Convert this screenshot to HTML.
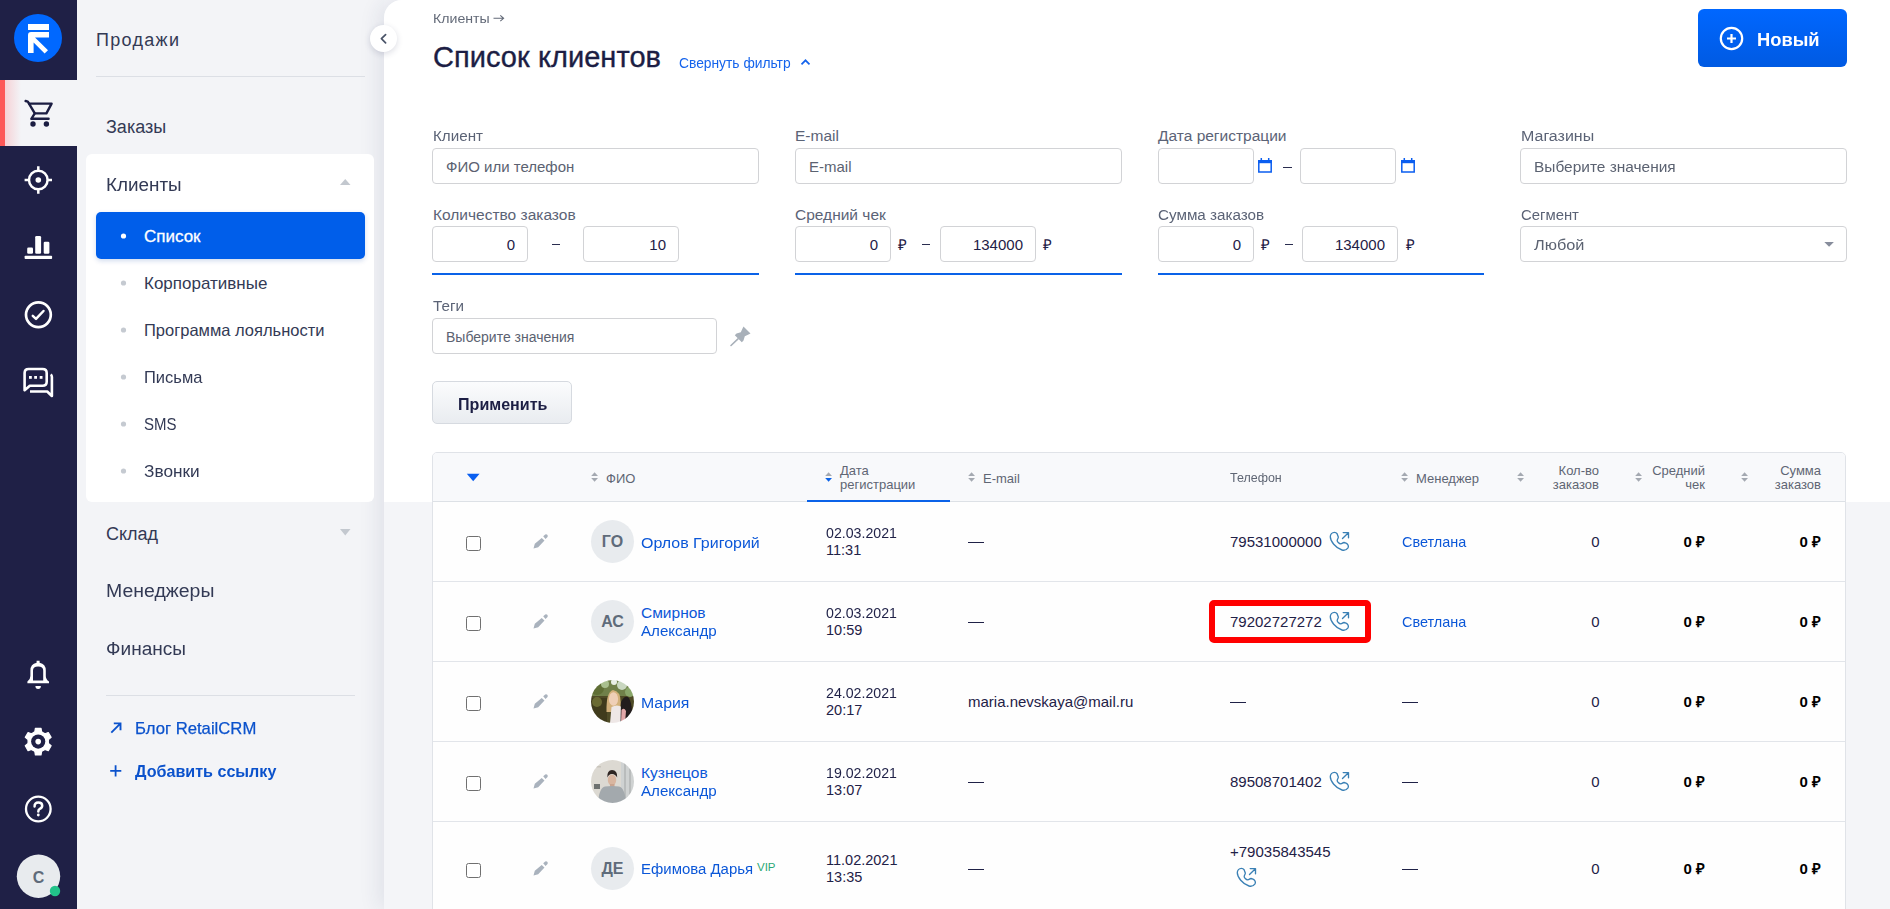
<!DOCTYPE html>
<html><head><meta charset="utf-8">
<style>
*{box-sizing:border-box;margin:0;padding:0}
html,body{width:1890px;height:909px;overflow:hidden;background:#f4f5f8;font-family:"Liberation Sans",sans-serif}
.a{position:absolute}
.t{position:absolute;line-height:1;white-space:nowrap}
#side{left:0;top:0;width:77px;height:909px;background:#1f2046}
#nav{left:77px;top:0;width:307px;height:909px;background:#f3f4f7}
#mainbg{left:384px;top:0;width:1506px;height:909px;background:#f4f5f8;border-top-left-radius:18px;box-shadow:-6px 0 20px rgba(40,45,90,0.085)}
#main{left:384px;top:0;width:1506px;height:502px;background:#fff;border-top-left-radius:18px}
.nt{color:#333a55}
.inp{position:absolute;background:#fff;border:1px solid #d2d3d6;border-radius:4px}
.lbl{color:#5b6376;font-size:15.5px}
.ph{color:#5b6271}
.val{color:#1f2147}
.uline{position:absolute;height:2px;background:#0a62e8}
.th{color:#5f6674;font-size:13px}
.sort{position:absolute;width:8px;height:11px}
.rowline{position:absolute;left:433px;width:1412px;height:1px;background:#e2e5ea}
.cb{position:absolute;width:15px;height:15px;border:1.3px solid #707070;border-radius:2.5px;background:#fff}
.av{position:absolute;width:43px;height:43px;border-radius:50%;background:#e8ebee}
.avt{color:#5f6b7a;font-weight:bold;font-size:16px}
.lnk{color:#0b57d8}
.dk{color:#1f2147}
</style></head><body>
<div class="a" id="side"></div>
<div class="a" id="nav"></div>
<div class="a" id="mainbg"></div>
<div class="a" id="main"></div>

<!-- sidebar icons -->
<svg class="a" style="left:0;top:0" width="77" height="909" viewBox="0 0 77 909">
  <circle cx="38" cy="38" r="24" fill="#0068ff"/>
  <rect x="28" y="24" width="21" height="6" fill="#fff"/>
  <path d="M28 35 Q28 32 31 32 H49 V37.5 H35 L48 50.3 L44.6 53.4 L33.6 42.6 V53 H28 Z" fill="#fff"/>
</svg>
<!-- active cart item -->
<div class="a" style="left:0;top:80px;width:77px;height:66px;background:linear-gradient(to right,#f6d2d6 0,#f6d2d6 5px,#f3f4f7 21px,#f3f4f7 100%)"></div>
<div class="a" style="left:0;top:80px;width:5px;height:66px;background:#fd5858"></div>
<svg class="a" style="left:0;top:0" width="77" height="909" viewBox="0 0 77 909">
  <g fill="none" stroke="#1b1d42" stroke-width="2.4" stroke-linecap="round" stroke-linejoin="round">
    <path d="M25.6 101 L27.8 101.6 L34.8 113.4 L31.3 118.8 H48.6"/>
    <path d="M29.2 103.6 H51.6 L46.4 113.4 H34.8"/>
  </g>
  <circle cx="33" cy="124" r="2.7" fill="#1b1d42"/>
  <circle cx="46.4" cy="124" r="2.7" fill="#1b1d42"/>
  <!-- target -->
  <g fill="none" stroke="#fff" stroke-width="2.5">
    <circle cx="38.3" cy="180" r="9.3"/>
    <path d="M38.3 166.3 V170.5 M38.3 189.5 V193.7 M24.6 180 H28.8 M47.8 180 H52"/>
  </g>
  <circle cx="38.3" cy="180" r="2.8" fill="#fff"/>
  <!-- chart -->
  <g fill="#fff">
    <rect x="27.2" y="247.5" width="5.8" height="6.2" rx="1.3"/>
    <rect x="35.2" y="236" width="5.9" height="17.7" rx="1.3"/>
    <rect x="43.7" y="241.7" width="5.7" height="12" rx="1.3"/>
    <rect x="24.6" y="255.8" width="27.5" height="3.3" rx="0.8"/>
  </g>
  <!-- check -->
  <g fill="none" stroke="#fff" stroke-linecap="round" stroke-linejoin="round">
    <circle cx="38.4" cy="314.8" r="12.4" stroke-width="2.7"/>
    <path d="M32.8 315.9 L36 318.9 L43.5 311" stroke-width="2.5"/>
  </g>
  <!-- chat -->
  <g fill="none" stroke="#fff" stroke-width="2.6" stroke-linejoin="round">
    <path d="M24.6 390.2 V373 Q24.6 369 28.6 369 H42.6 Q46.7 369 46.7 373 V381.8 Q46.7 385.8 42.6 385.8 H29.8 Z"/>
    <path d="M50.6 374.6 Q51.9 375.2 51.9 377 V396 L47.2 391.5 H30"/>
  </g>
  <g fill="#fff">
    <rect x="29" y="376" width="2.8" height="2.8"/>
    <rect x="34.2" y="376" width="2.8" height="2.8"/>
    <rect x="39.7" y="376" width="2.8" height="2.8"/>
  </g>
  <!-- bell -->
  <path fill="#fff" fill-rule="evenodd" d="M27.4 683.3 V681.6 Q30.4 679.4 30.4 676 V670.5 Q30.4 664 36.6 662.8 V660.8 H39.6 V662.8 Q45.8 664 45.8 670.5 V676 Q45.8 679.4 49 681.6 V683.3 Z M33 680.4 H43.2 V670.5 Q43.2 666.6 38.1 666.6 Q33 666.6 33 670.5 Z"/>
  <path fill="#fff" d="M35.4 686 H40.9 Q40.9 689 38.15 689 Q35.4 689 35.4 686 Z"/>
  <!-- gear -->
  <path id="gear" fill="#fff" stroke="#fff" stroke-width="1.2" stroke-linejoin="round" d="M34.81 731.77 L35.37 728.30 L41.03 728.30 L41.59 731.77 L43.25 732.85 L45.02 733.75 L48.31 732.50 L51.13 737.40 L48.41 739.62 L48.30 741.60 L48.41 743.58 L51.13 745.80 L48.31 750.70 L45.02 749.45 L43.25 750.35 L41.59 751.43 L41.03 754.90 L35.37 754.90 L34.81 751.43 L33.15 750.35 L31.38 749.45 L28.09 750.70 L25.27 745.80 L27.99 743.58 L28.10 741.60 L27.99 739.62 L25.27 737.40 L28.09 732.50 L31.38 733.75 L33.15 732.85 Z"/><circle cx="38.2" cy="741.6" r="7.1" fill="#1f2046"/><circle cx="38.2" cy="741.6" r="2.8" fill="#fff"/>
  <!-- help -->
  <circle cx="38.3" cy="809" r="12.3" fill="none" stroke="#fff" stroke-width="2.3"/>
  <path d="M34.6 806.4 Q34.4 802.6 38.3 802.6 Q42.2 802.6 42.2 805.8 Q42.2 807.8 39.8 808.9 Q38.3 809.6 38.3 811.6" fill="none" stroke="#fff" stroke-width="2.5" stroke-linecap="round"/>
  <circle cx="38.3" cy="815" r="1.4" fill="#fff"/>
  <!-- avatar -->
  <circle cx="38.5" cy="876.2" r="21.7" fill="#e8ebee"/>
  <circle cx="55" cy="891" r="5.2" fill="#22c38a"/>
</svg>
<div class="t" style="left:32px;top:870px;font-size:16px;font-weight:bold;color:#5f6b7a;width:13px;text-align:center">С</div>

<!-- NAV PANEL -->
<div class="t nt" style="left:96px;top:30.5px;font-size:18px;letter-spacing:1.3px">Продажи</div>
<div class="a" style="left:96px;top:76px;width:269px;height:1px;background:#dcdfe5"></div>
<div class="t nt" style="left:106px;top:118px;font-size:18px;transform:scaleX(1.000);transform-origin:left">Заказы</div>
<div class="a" style="left:86px;top:154px;width:288px;height:348px;background:#fff;border-radius:6px"></div>
<div class="t nt" style="left:106px;top:176px;font-size:18px;transform:scaleX(1.048);transform-origin:left">Клиенты</div>
<svg class="a" style="left:340px;top:179px" width="11" height="6"><path d="M0 6 L5.25 0 L10.5 6 Z" fill="#c3c8cf"/></svg>
<div class="a" style="left:96px;top:212px;width:269px;height:47px;background:#005eea;border-radius:5px;box-shadow:0 2px 5px rgba(0,60,160,0.18)"></div>
<svg class="a" style="left:119px;top:231.7px" width="9" height="8"><circle cx="4.5" cy="4" r="2.6" fill="#fff"/></svg>
<div class="t" style="left:144px;top:228px;font-size:17px;color:#fff;-webkit-text-stroke:0.3px #fff;transform:scaleX(1.000);transform-origin:left">Список</div>
<svg class="a" style="left:119px;top:278.7px" width="9" height="8"><circle cx="4.5" cy="4" r="2.6" fill="#c5cad1"/></svg>
<div class="t nt" style="left:144px;top:275px;font-size:17px;transform:scaleX(1.000);transform-origin:left">Корпоративные</div>
<svg class="a" style="left:119px;top:325.7px" width="9" height="8"><circle cx="4.5" cy="4" r="2.6" fill="#c5cad1"/></svg>
<div class="t nt" style="left:144px;top:322px;font-size:16.5px;transform:scaleX(1.000);transform-origin:left">Программа лояльности</div>
<svg class="a" style="left:119px;top:372.7px" width="9" height="8"><circle cx="4.5" cy="4" r="2.6" fill="#c5cad1"/></svg>
<div class="t nt" style="left:144px;top:369px;font-size:17px;transform:scaleX(0.970);transform-origin:left">Письма</div>
<svg class="a" style="left:119px;top:419.7px" width="9" height="8"><circle cx="4.5" cy="4" r="2.6" fill="#c5cad1"/></svg>
<div class="t nt" style="left:144px;top:416px;font-size:17px;transform:scaleX(0.882);transform-origin:left">SMS</div>
<svg class="a" style="left:119px;top:466.7px" width="9" height="8"><circle cx="4.5" cy="4" r="2.6" fill="#c5cad1"/></svg>
<div class="t nt" style="left:144px;top:463px;font-size:17px;transform:scaleX(1.015);transform-origin:left">Звонки</div>

<div class="t nt" style="left:106px;top:525.2px;font-size:18px;transform:scaleX(1.000);transform-origin:left">Склад</div>
<svg class="a" style="left:340px;top:529px" width="11" height="7"><path d="M0 0 L10.5 0 L5.25 6.5 Z" fill="#c3c8cf"/></svg>
<div class="t nt" style="left:106px;top:582.4px;font-size:18px;transform:scaleX(1.081);transform-origin:left">Менеджеры</div>
<div class="t nt" style="left:106px;top:639.5px;font-size:18px;transform:scaleX(1.059);transform-origin:left">Финансы</div>
<div class="a" style="left:106px;top:695px;width:249px;height:1px;background:#dcdfe5"></div>
<svg class="a" style="left:108px;top:720px" width="16" height="16"><path d="M3.3 12.6 L12.5 3.4 M5.8 3.4 H12.5 V10.2" fill="none" stroke="#0b52cc" stroke-width="1.9"/></svg>
<div class="t lnk" style="left:135px;top:720px;font-size:17px;color:#0b52cc;-webkit-text-stroke:0.25px #0b52cc;transform:scaleX(0.981);transform-origin:left">Блог RetailCRM</div>
<svg class="a" style="left:108px;top:763px" width="16" height="16"><path d="M7.6 2.3 V13.6 M2.2 7.9 H13.3" fill="none" stroke="#0b52cc" stroke-width="1.8"/></svg>
<div class="t lnk" style="left:135px;top:763px;font-size:17px;font-weight:bold;color:#0b52cc;transform:scaleX(0.947);transform-origin:left">Добавить ссылку</div>

<!-- collapse btn -->
<div class="a" style="left:370px;top:25px;width:27.4px;height:27.4px;border-radius:50%;background:#fff;box-shadow:0 2px 6px rgba(30,40,80,0.16)"></div>
<svg class="a" style="left:370px;top:25px" width="28" height="28"><path d="M15.6 9.6 L11.4 13.7 L15.6 17.8" fill="none" stroke="#4a5468" stroke-width="1.7" stroke-linecap="round" stroke-linejoin="round"/></svg>

<!-- MAIN HEADER -->
<div class="t" style="left:433px;top:12px;font-size:13.5px;color:#636a78;transform:scaleX(1.048);transform-origin:left">Клиенты</div><svg class="a" style="left:492px;top:13px" width="14" height="11"><path d="M1.5 5.3 H11.5 M8.3 2.4 L11.6 5.3 L8.3 8.2" fill="none" stroke="#636a78" stroke-width="1.1"/></svg>
<div class="t" style="left:433px;top:43.2px;font-size:29px;color:#1c1e44;letter-spacing:0.05px;-webkit-text-stroke:0.35px #1c1e44">Список клиентов</div>
<div class="t" style="left:679px;top:56px;font-size:14px;color:#1463ec;transform:scaleX(0.986);transform-origin:left">Свернуть фильтр</div>
<svg class="a" style="left:798px;top:56px" width="14" height="12"><path d="M3.5 8.3 L7.5 4.3 L11.5 8.3" fill="none" stroke="#1463ec" stroke-width="1.7"/></svg>

<div class="a" style="left:1698px;top:9px;width:149px;height:58px;border-radius:6px;background:linear-gradient(#0067ff,#005ae2)"></div>
<svg class="a" style="left:1715px;top:22px" width="34" height="34"><circle cx="16.5" cy="16.5" r="10.7" fill="none" stroke="#fff" stroke-width="2.2"/><path d="M16.5 12 V21 M12 16.5 H21" stroke="#fff" stroke-width="2.2"/></svg>
<div class="t" style="left:1757px;top:30px;font-size:19px;font-weight:bold;color:#fff;transform:scaleX(0.965);transform-origin:left">Новый</div>

<!-- FILTERS -->
<!-- FILTERS -->
<div class="t lbl" style="left:433px;top:127.6px;transform:scaleX(0.980);transform-origin:left">Клиент</div>
<div class="inp" style="left:432px;top:148px;width:327px;height:36px"></div>
<div class="t ph" style="left:446px;top:159px;font-size:15px">ФИО или телефон</div>
<div class="t lbl" style="left:795px;top:127.6px">E-mail</div>
<div class="inp" style="left:795px;top:148px;width:327px;height:36px"></div>
<div class="t ph" style="left:809px;top:159px;font-size:15px">E-mail</div>
<div class="t lbl" style="left:1158px;top:127.6px;transform:scaleX(1.000);transform-origin:left">Дата регистрации</div>
<div class="inp" style="left:1158px;top:148px;width:96px;height:36px"></div>
<div class="inp" style="left:1300px;top:148px;width:96px;height:36px"></div>
<svg class="a" style="left:1257px;top:157px" width="16" height="17"><path d="M1.8 3.8 H14.2 V15 H1.8 Z" fill="none" stroke="#0b5ef0" stroke-width="1.5"/><rect x="1" y="3" width="14" height="3.2" fill="#0b5ef0"/><path d="M4.3 1 V3.5 M11.7 1 V3.5" stroke="#0b5ef0" stroke-width="1.5"/></svg>
<svg class="a" style="left:1400px;top:157px" width="16" height="17"><path d="M1.8 3.8 H14.2 V15 H1.8 Z" fill="none" stroke="#0b5ef0" stroke-width="1.5"/><rect x="1" y="3" width="14" height="3.2" fill="#0b5ef0"/><path d="M4.3 1 V3.5 M11.7 1 V3.5" stroke="#0b5ef0" stroke-width="1.5"/></svg>
<div class="a" style="left:1283px;top:167px;width:8.5px;height:1.3px;background:#2a2d4f"></div>
<div class="t lbl" style="left:1521px;top:127.6px;transform:scaleX(1.031);transform-origin:left">Магазины</div>
<div class="inp" style="left:1520px;top:148px;width:327px;height:36px"></div>
<div class="t ph" style="left:1534px;top:159px;font-size:15px;transform:scaleX(1.03);transform-origin:left">Выберите значения</div>

<div class="t lbl" style="left:433px;top:206.6px;transform:scaleX(1.000);transform-origin:left">Количество заказов</div>
<div class="inp" style="left:432px;top:226px;width:96px;height:36px"></div>
<div class="t val" style="left:432px;top:237px;width:83px;text-align:right;font-size:15px">0</div>
<div class="a" style="left:552px;top:244px;width:8px;height:1.3px;background:#2a2d4f"></div>
<div class="inp" style="left:583px;top:226px;width:96px;height:36px"></div>
<div class="t val" style="left:583px;top:237px;width:83px;text-align:right;font-size:15px">10</div>
<div class="uline" style="left:432px;top:273px;width:327px"></div>

<div class="t lbl" style="left:795px;top:206.6px;transform:scaleX(1.000);transform-origin:left">Средний чек</div>
<div class="inp" style="left:795px;top:226px;width:96px;height:36px"></div>
<div class="t val" style="left:795px;top:237px;width:83px;text-align:right;font-size:15px">0</div>
<div class="t val" style="left:898px;top:237px;font-size:15px">₽</div>
<div class="a" style="left:922px;top:244px;width:8px;height:1.3px;background:#2a2d4f"></div>
<div class="inp" style="left:940px;top:226px;width:96px;height:36px"></div>
<div class="t val" style="left:940px;top:237px;width:83px;text-align:right;font-size:15px">134000</div>
<div class="t val" style="left:1043px;top:237px;font-size:15px">₽</div>
<div class="uline" style="left:795px;top:273px;width:327px"></div>

<div class="t lbl" style="left:1158px;top:206.6px;transform:scaleX(0.982);transform-origin:left">Сумма заказов</div>
<div class="inp" style="left:1158px;top:226px;width:96px;height:36px"></div>
<div class="t val" style="left:1158px;top:237px;width:83px;text-align:right;font-size:15px">0</div>
<div class="t val" style="left:1261px;top:237px;font-size:15px">₽</div>
<div class="a" style="left:1285px;top:244px;width:8px;height:1.3px;background:#2a2d4f"></div>
<div class="inp" style="left:1302px;top:226px;width:96px;height:36px"></div>
<div class="t val" style="left:1302px;top:237px;width:83px;text-align:right;font-size:15px">134000</div>
<div class="t val" style="left:1406px;top:237px;font-size:15px">₽</div>
<div class="uline" style="left:1158px;top:273px;width:326px"></div>

<div class="t lbl" style="left:1521px;top:206.6px;transform:scaleX(0.959);transform-origin:left">Сегмент</div>
<div class="inp" style="left:1520px;top:226px;width:327px;height:36px"></div>
<div class="t ph" style="left:1534px;top:237px;font-size:15px;transform:scaleX(1.087);transform-origin:left">Любой</div>
<svg class="a" style="left:1824px;top:241.5px" width="11" height="6"><path d="M0.3 0 H9.9 L5.1 4.8 Z" fill="#878d9c"/></svg>

<div class="t lbl" style="left:433px;top:297.6px;transform:scaleX(0.981);transform-origin:left">Теги</div>
<div class="inp" style="left:432px;top:318px;width:285px;height:36px"></div>
<div class="t ph" style="left:446px;top:330px;font-size:14px">Выберите значения</div>
<svg class="a" style="left:729px;top:325px" width="24" height="22"><path d="M14.5 1.5 L21.5 8.5 L19.5 9.5 L15.8 11.2 L14.5 15.5 L12.8 17.2 L5.8 10.2 L7.5 8.5 L11.8 7.2 L13.5 3.5 Z" fill="#a8b0b9"/><path d="M9 13.8 L2 20.5" stroke="#a8b0b9" stroke-width="1.6" stroke-linecap="round"/></svg>

<div class="a" style="left:432px;top:381px;width:140px;height:43px;border-radius:5px;border:1px solid #d6dae0;background:linear-gradient(#fbfcfd,#e9ecf0)"></div>
<div class="t" style="left:458px;top:396px;font-size:17px;font-weight:bold;color:#1c1e44;transform:scaleX(0.946);transform-origin:left">Применить</div>

<!--TABLE_START-->
<!-- TABLE -->
<div class="a" style="left:432px;top:452px;width:1414px;height:470px;border:1px solid #e0e3e8;border-radius:5px;background:#fefefe"></div>
<div class="a" style="left:433px;top:453px;width:1412px;height:48px;background:#f8f9fb;border-top-left-radius:4px;border-top-right-radius:4px"></div>
<div class="a" style="left:433px;top:501px;width:1412px;height:1px;background:#dde1e6"></div>
<div class="a" style="left:807px;top:500px;width:143px;height:2px;background:#0a62e8"></div>
<svg class="a" style="left:466px;top:473px" width="15" height="9"><path d="M0.8 0.8 H13.6 L7.2 8.3 Z" fill="#0a5ff0"/></svg>
<svg class="a" style="left:591px;top:471.5px" width="8" height="11"><path d="M0.2 4 L3.6 0.2 L7 4 Z" fill="#a4a9b1"/><path d="M0.2 6 L3.6 9.8 L7 6 Z" fill="#a4a9b1"/></svg>
<svg class="a" style="left:824.5px;top:471.5px" width="8" height="11"><path d="M0.2 4 L3.6 0.2 L7 4 Z" fill="#a4a9b1"/><path d="M0.2 6 L3.6 9.8 L7 6 Z" fill="#0a62e8"/></svg>
<svg class="a" style="left:968px;top:471.5px" width="8" height="11"><path d="M0.2 4 L3.6 0.2 L7 4 Z" fill="#a4a9b1"/><path d="M0.2 6 L3.6 9.8 L7 6 Z" fill="#a4a9b1"/></svg>
<svg class="a" style="left:1401px;top:471.5px" width="8" height="11"><path d="M0.2 4 L3.6 0.2 L7 4 Z" fill="#a4a9b1"/><path d="M0.2 6 L3.6 9.8 L7 6 Z" fill="#a4a9b1"/></svg>
<svg class="a" style="left:1517px;top:471.5px" width="8" height="11"><path d="M0.2 4 L3.6 0.2 L7 4 Z" fill="#a4a9b1"/><path d="M0.2 6 L3.6 9.8 L7 6 Z" fill="#a4a9b1"/></svg>
<svg class="a" style="left:1635px;top:471.5px" width="8" height="11"><path d="M0.2 4 L3.6 0.2 L7 4 Z" fill="#a4a9b1"/><path d="M0.2 6 L3.6 9.8 L7 6 Z" fill="#a4a9b1"/></svg>
<svg class="a" style="left:1741px;top:471.5px" width="8" height="11"><path d="M0.2 4 L3.6 0.2 L7 4 Z" fill="#a4a9b1"/><path d="M0.2 6 L3.6 9.8 L7 6 Z" fill="#a4a9b1"/></svg>
<div class="t th" style="left:606px;top:471.6px">ФИО</div>
<div class="t th" style="left:840px;top:463.8px">Дата</div>
<div class="t th" style="left:840px;top:477.5px">регистрации</div>
<div class="t th" style="left:983px;top:471.8px">E-mail</div>
<div class="t th" style="left:1230px;top:471.3px;transform:scaleX(0.959);transform-origin:left">Телефон</div>
<div class="t th" style="left:1416px;top:471.6px">Менеджер</div>
<div class="t th" style="left:1399px;top:464.0px;width:200px;text-align:right">Кол-во</div>
<div class="t th" style="left:1399px;top:477.8px;width:200px;text-align:right">заказов</div>
<div class="t th" style="left:1505px;top:464.0px;width:200px;text-align:right">Средний</div>
<div class="t th" style="left:1505px;top:477.8px;width:200px;text-align:right">чек</div>
<div class="t th" style="left:1621px;top:464.0px;width:200px;text-align:right">Сумма</div>
<div class="t th" style="left:1621px;top:477.8px;width:200px;text-align:right">заказов</div>
<div class="cb" style="left:466px;top:536px"></div>
<svg class="a" style="left:528px;top:528px" width="26" height="26"><path d="M5.5 20.5 L6.8 15.8 L13.7 9.9 L16.5 12.6 L10.2 19.2 Z M15.2 8.3 L17.2 6.4 Q18.5 5.8 19.5 7 Q20.2 8.2 19.3 9.3 L17.5 11.1 Z" fill="#a9b2bd"/></svg>
<div class="av" style="left:591px;top:519.5px"></div>
<div class="t avt" style="left:591px;top:534.0px;width:43px;text-align:center">ГО</div>
<div class="t lnk" style="left:641px;top:535.1px;font-size:15.5px;;transform:scaleX(1.031);transform-origin:left">Орлов Григорий</div>
<div class="t dk" style="left:826px;top:525.5px;font-size:14.5px;;transform:scaleX(0.978);transform-origin:left">02.03.2021</div>
<div class="t dk" style="left:826px;top:543.4px;font-size:14.5px;">11:31</div>
<div class="a" style="left:968px;top:541.6px;width:16px;height:1.4px;background:#1f2147"></div>
<div class="t dk" style="left:1230px;top:534.0px;font-size:15px;;transform:scaleX(1.000);transform-origin:left">79531000000</div>
<svg class="a" style="left:1326px;top:528px" width="26" height="26"><path d="M8.5 4.3 C6 4.3 4.3 6.3 4.3 8.8 C4.3 13 9.5 20 16 22 C18.5 22.8 20.5 21.8 22 19.8 C23 18 22 16.2 20 15.2 L18 14.5 C17 14.3 16 15.8 14.8 15.8 C13 15.8 11 13.5 11.2 12.3 C11.5 11 12.5 10 12.3 9 L11 5.6 C10.5 4.8 9.6 4.3 8.5 4.3 Z M16.5 10.5 L22.4 4.8 M17.2 4.6 H22.5 V9.8" fill="none" stroke="#3a80b5" stroke-width="1.35" stroke-linecap="round" stroke-linejoin="round"/></svg>
<div class="t lnk" style="left:1402px;top:534.2px;font-size:15px;;transform:scaleX(0.963);transform-origin:left">Светлана</div>
<div class="t dk" style="left:1299.5px;top:534.2px;width:300px;text-align:right;font-size:15px;">0</div>
<div class="t " style="left:1405px;top:534.2px;width:300px;text-align:right;font-size:15px;font-weight:bold;color:#000">0 ₽</div>
<div class="t " style="left:1521px;top:534.2px;width:300px;text-align:right;font-size:15px;font-weight:bold;color:#000">0 ₽</div>
<div class="rowline" style="top:581px"></div>
<div class="cb" style="left:466px;top:616px"></div>
<svg class="a" style="left:528px;top:608px" width="26" height="26"><path d="M5.5 20.5 L6.8 15.8 L13.7 9.9 L16.5 12.6 L10.2 19.2 Z M15.2 8.3 L17.2 6.4 Q18.5 5.8 19.5 7 Q20.2 8.2 19.3 9.3 L17.5 11.1 Z" fill="#a9b2bd"/></svg>
<div class="av" style="left:591px;top:599.5px"></div>
<div class="t avt" style="left:591px;top:614.0px;width:43px;text-align:center">АС</div>
<div class="t lnk" style="left:641px;top:605.1px;font-size:15.5px;;transform:scaleX(1.000);transform-origin:left">Смирнов</div>
<div class="t lnk" style="left:641px;top:623.1px;font-size:15.5px;;transform:scaleX(0.976);transform-origin:left">Александр</div>
<div class="t dk" style="left:826px;top:605.5px;font-size:14.5px;;transform:scaleX(0.978);transform-origin:left">02.03.2021</div>
<div class="t dk" style="left:826px;top:623.4px;font-size:14.5px;">10:59</div>
<div class="a" style="left:968px;top:621.6px;width:16px;height:1.4px;background:#1f2147"></div>
<div class="t dk" style="left:1230px;top:614.0px;font-size:15px;;transform:scaleX(1.000);transform-origin:left">79202727272</div>
<svg class="a" style="left:1326px;top:608px" width="26" height="26"><path d="M8.5 4.3 C6 4.3 4.3 6.3 4.3 8.8 C4.3 13 9.5 20 16 22 C18.5 22.8 20.5 21.8 22 19.8 C23 18 22 16.2 20 15.2 L18 14.5 C17 14.3 16 15.8 14.8 15.8 C13 15.8 11 13.5 11.2 12.3 C11.5 11 12.5 10 12.3 9 L11 5.6 C10.5 4.8 9.6 4.3 8.5 4.3 Z M16.5 10.5 L22.4 4.8 M17.2 4.6 H22.5 V9.8" fill="none" stroke="#3a80b5" stroke-width="1.35" stroke-linecap="round" stroke-linejoin="round"/></svg>
<div class="t lnk" style="left:1402px;top:614.2px;font-size:15px;;transform:scaleX(0.963);transform-origin:left">Светлана</div>
<div class="t dk" style="left:1299.5px;top:614.2px;width:300px;text-align:right;font-size:15px;">0</div>
<div class="t " style="left:1405px;top:614.2px;width:300px;text-align:right;font-size:15px;font-weight:bold;color:#000">0 ₽</div>
<div class="t " style="left:1521px;top:614.2px;width:300px;text-align:right;font-size:15px;font-weight:bold;color:#000">0 ₽</div>
<div class="rowline" style="top:661px"></div>
<div class="cb" style="left:466px;top:696px"></div>
<svg class="a" style="left:528px;top:688px" width="26" height="26"><path d="M5.5 20.5 L6.8 15.8 L13.7 9.9 L16.5 12.6 L10.2 19.2 Z M15.2 8.3 L17.2 6.4 Q18.5 5.8 19.5 7 Q20.2 8.2 19.3 9.3 L17.5 11.1 Z" fill="#a9b2bd"/></svg>
<svg class="a" style="left:591px;top:679.5px" width="43" height="43"><use href="#ph_maria"/></svg>
<div class="t lnk" style="left:641px;top:695.1px;font-size:15.5px;;transform:scaleX(1.022);transform-origin:left">Мария</div>
<div class="t dk" style="left:826px;top:685.5px;font-size:14.5px;;transform:scaleX(0.978);transform-origin:left">24.02.2021</div>
<div class="t dk" style="left:826px;top:703.4px;font-size:14.5px;">20:17</div>
<div class="t dk" style="left:968px;top:694.0px;font-size:15px;">maria.nevskaya@mail.ru</div>
<div class="a" style="left:1230px;top:701.6px;width:16px;height:1.4px;background:#1f2147"></div>
<div class="a" style="left:1402px;top:701.6px;width:16px;height:1.4px;background:#1f2147"></div>
<div class="t dk" style="left:1299.5px;top:694.2px;width:300px;text-align:right;font-size:15px;">0</div>
<div class="t " style="left:1405px;top:694.2px;width:300px;text-align:right;font-size:15px;font-weight:bold;color:#000">0 ₽</div>
<div class="t " style="left:1521px;top:694.2px;width:300px;text-align:right;font-size:15px;font-weight:bold;color:#000">0 ₽</div>
<div class="rowline" style="top:741px"></div>
<div class="cb" style="left:466px;top:776px"></div>
<svg class="a" style="left:528px;top:768px" width="26" height="26"><path d="M5.5 20.5 L6.8 15.8 L13.7 9.9 L16.5 12.6 L10.2 19.2 Z M15.2 8.3 L17.2 6.4 Q18.5 5.8 19.5 7 Q20.2 8.2 19.3 9.3 L17.5 11.1 Z" fill="#a9b2bd"/></svg>
<svg class="a" style="left:591px;top:759.5px" width="43" height="43"><use href="#ph_kuz"/></svg>
<div class="t lnk" style="left:641px;top:765.1px;font-size:15.5px;;transform:scaleX(1.000);transform-origin:left">Кузнецов</div>
<div class="t lnk" style="left:641px;top:783.1px;font-size:15.5px;;transform:scaleX(0.976);transform-origin:left">Александр</div>
<div class="t dk" style="left:826px;top:765.5px;font-size:14.5px;;transform:scaleX(0.978);transform-origin:left">19.02.2021</div>
<div class="t dk" style="left:826px;top:783.4px;font-size:14.5px;">13:07</div>
<div class="a" style="left:968px;top:781.6px;width:16px;height:1.4px;background:#1f2147"></div>
<div class="t dk" style="left:1230px;top:774.0px;font-size:15px;;transform:scaleX(1.000);transform-origin:left">89508701402</div>
<svg class="a" style="left:1326px;top:768px" width="26" height="26"><path d="M8.5 4.3 C6 4.3 4.3 6.3 4.3 8.8 C4.3 13 9.5 20 16 22 C18.5 22.8 20.5 21.8 22 19.8 C23 18 22 16.2 20 15.2 L18 14.5 C17 14.3 16 15.8 14.8 15.8 C13 15.8 11 13.5 11.2 12.3 C11.5 11 12.5 10 12.3 9 L11 5.6 C10.5 4.8 9.6 4.3 8.5 4.3 Z M16.5 10.5 L22.4 4.8 M17.2 4.6 H22.5 V9.8" fill="none" stroke="#3a80b5" stroke-width="1.35" stroke-linecap="round" stroke-linejoin="round"/></svg>
<div class="a" style="left:1402px;top:781.6px;width:16px;height:1.4px;background:#1f2147"></div>
<div class="t dk" style="left:1299.5px;top:774.2px;width:300px;text-align:right;font-size:15px;">0</div>
<div class="t " style="left:1405px;top:774.2px;width:300px;text-align:right;font-size:15px;font-weight:bold;color:#000">0 ₽</div>
<div class="t " style="left:1521px;top:774.2px;width:300px;text-align:right;font-size:15px;font-weight:bold;color:#000">0 ₽</div>
<div class="rowline" style="top:821px"></div>
<div class="cb" style="left:466px;top:863px"></div>
<svg class="a" style="left:528px;top:855px" width="26" height="26"><path d="M5.5 20.5 L6.8 15.8 L13.7 9.9 L16.5 12.6 L10.2 19.2 Z M15.2 8.3 L17.2 6.4 Q18.5 5.8 19.5 7 Q20.2 8.2 19.3 9.3 L17.5 11.1 Z" fill="#a9b2bd"/></svg>
<div class="av" style="left:591px;top:846.5px"></div>
<div class="t avt" style="left:591px;top:861.0px;width:43px;text-align:center">ДЕ</div>
<div class="t lnk" style="left:641px;top:860.9px;font-size:15.5px;;transform:scaleX(0.965);transform-origin:left">Ефимова Дарья</div>
<div class="t " style="left:757px;top:861.9px;font-size:11.5px;color:#2aa876">VIP</div>
<div class="t dk" style="left:826px;top:852.5px;font-size:14.5px;;transform:scaleX(1.000);transform-origin:left">11.02.2021</div>
<div class="t dk" style="left:826px;top:870.4px;font-size:14.5px;">13:35</div>
<div class="a" style="left:968px;top:868.6px;width:16px;height:1.4px;background:#1f2147"></div>
<div class="t dk" style="left:1230px;top:844.1px;font-size:15px;">+79035843545</div>
<svg class="a" style="left:1233px;top:864px" width="26" height="26"><path d="M8.5 4.3 C6 4.3 4.3 6.3 4.3 8.8 C4.3 13 9.5 20 16 22 C18.5 22.8 20.5 21.8 22 19.8 C23 18 22 16.2 20 15.2 L18 14.5 C17 14.3 16 15.8 14.8 15.8 C13 15.8 11 13.5 11.2 12.3 C11.5 11 12.5 10 12.3 9 L11 5.6 C10.5 4.8 9.6 4.3 8.5 4.3 Z M16.5 10.5 L22.4 4.8 M17.2 4.6 H22.5 V9.8" fill="none" stroke="#3a80b5" stroke-width="1.35" stroke-linecap="round" stroke-linejoin="round"/></svg>
<div class="a" style="left:1402px;top:868.6px;width:16px;height:1.4px;background:#1f2147"></div>
<div class="t dk" style="left:1299.5px;top:861.2px;width:300px;text-align:right;font-size:15px;">0</div>
<div class="t " style="left:1405px;top:861.2px;width:300px;text-align:right;font-size:15px;font-weight:bold;color:#000">0 ₽</div>
<div class="t " style="left:1521px;top:861.2px;width:300px;text-align:right;font-size:15px;font-weight:bold;color:#000">0 ₽</div>
<div class="a" style="left:1209px;top:600px;width:162px;height:43px;border:6px solid #ff0000;border-radius:5px"></div>
<svg width="0" height="0" style="position:absolute">
<defs>
<clipPath id="avclip"><circle cx="21.5" cy="21.5" r="21.5"/></clipPath>
<filter id="soft" x="-10%" y="-10%" width="120%" height="120%"><feGaussianBlur stdDeviation="0.7"/></filter>
<g id="ph_maria" clip-path="url(#avclip)"><g filter="url(#soft)">
  <rect width="43" height="43" fill="#4f4b25"/>
  <rect x="0" y="0" width="43" height="16" fill="#6f8048"/>
  <circle cx="6" cy="8" r="7" fill="#5f6e35"/>
  <circle cx="14" cy="4" r="4" fill="#a9bf8e"/>
  <circle cx="31" cy="5" r="5" fill="#c9d7c0"/>
  <circle cx="39" cy="12" r="5" fill="#8aa66a"/>
  <circle cx="23" cy="2" r="3" fill="#e9efe6"/>
  <rect x="0" y="18" width="16" height="25" fill="#3f3b1c"/>
  <circle cx="6" cy="22" r="5" fill="#6b6a33"/>
  <path d="M15.5 32 Q15 12 22 10 Q29.5 11 29.7 22 L29 32 Z" fill="#d2b07a"/>
  <ellipse cx="22.5" cy="19" rx="4.6" ry="6.8" fill="#efcfb6"/>
  <path d="M19 43 L20.5 27 Q26 24 31 27 L34 43 Z" fill="#eee7e6"/>
  <path d="M29.5 43 L30 22 Q33 15.5 37 17 Q41.5 21 41.5 43 Z" fill="#231c1c"/>
  <path d="M30 43 L30.5 30 Q33 27 35 31 L34 43 Z" fill="#e2a7a8"/>
</g></g>
<g id="ph_kuz" clip-path="url(#avclip)"><g filter="url(#soft)">
  <rect width="43" height="43" fill="#dcd9d2"/>
  <rect x="30" y="0" width="13" height="43" fill="#cfd2d2"/>
  <rect x="33" y="0" width="2" height="43" fill="#b9bcbc"/>
  <rect x="38" y="0" width="2" height="43" fill="#b9bcbc"/>
  <rect x="3" y="24" width="6" height="5" fill="#6d716f"/>
  <rect x="0" y="6" width="10" height="1.5" fill="#c8c4bb"/>
  <ellipse cx="21" cy="20" rx="4.2" ry="5.5" fill="#d9b6a0"/>
  <path d="M16.3 17.5 Q16 10 21 10 Q26.5 10 26.2 17.5 Q24 13.8 21 14 Q18 13.8 16.3 17.5 Z" fill="#2f2522"/>
  <rect x="19" y="24" width="4.5" height="3" fill="#caa48f"/>
  <path d="M7 43 Q8 28 14 26.5 L21 26 L28 26.5 Q34 28 35 43 Z" fill="#a3a9ad"/>
</g></g>
</defs></svg>
<!--TABLE_END-->
</body></html>
